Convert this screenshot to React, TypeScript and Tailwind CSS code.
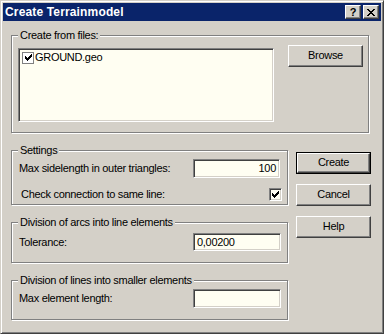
const font = "font-['Liberation_Sans',Arial,sans-serif]";
const raised =
  "border border-t-white border-l-white border-b-[#404040] border-r-[#404040] shadow-[inset_-1px_-1px_0_#808080]";
const sunken =
  "border border-t-[#808080] border-l-[#808080] border-b-white border-r-white shadow-[inset_1px_1px_0_#404040,inset_-1px_-1px_0_#d4d0c8]";
const etched = "relative border border-[#808080] shadow-[inset_1px_1px_0_#fff,1px_1px_0_#fff]";

function Check() {
  return (
    <svg width="7" height="7" viewBox="0 0 7 7" shapeRendering="crispEdges">
      <path
        fill="#000"
        d="M0 2h1v3H0z M1 3h1v3H1z M2 4h1v3H2z M3 3h1v3H3z M4 2h1v3H4z M5 1h1v3H5z M6 0h1v3H6z"
      />
    </svg>
  );
}

function CheckBox() {
  return (
    <div className={`${sunken} flex h-[13px] w-[13px] items-center justify-center bg-[#fffef2]`}>
      <Check />
    </div>
  );
}

function Group({
  title,
  className,
  children,
}: {
  title: string;
  className: string;
  children: React.ReactNode;
}) {
  return (
    <div className={`${etched} ${className}`}>
      <span className="absolute left-[6px] top-[-7px] bg-[#d4d0c8] px-[2px] leading-[13px]">
        {title}
      </span>
      {children}
    </div>
  );
}

function Button({ label, isDefault }: { label: string; isDefault?: boolean }) {
  if (isDefault) {
    return (
      <div className="h-[22px] w-[75px] border border-black">
        <div className={`${raised} flex h-full w-full items-center justify-center pb-px`}>{label}</div>
      </div>
    );
  }
  return (
    <div className={`${raised} flex h-[22px] w-[75px] items-center justify-center pb-px`}>{label}</div>
  );
}

function Field({ value, right, h }: { value: string; right?: boolean; h: string }) {
  return (
    <div
      className={`${sunken} ${h} flex items-center bg-[#fffef2] px-[3px] ${
        right ? "justify-end" : "justify-start"
      }`}
    >
      {value}
    </div>
  );
}

export default function App() {
  return (
    <div
      className={`${font} h-[334px] w-[384px] overflow-hidden border border-t-[#d4d0c8] border-l-[#d4d0c8] border-b-[#404040] border-r-[#404040] bg-[#d4d0c8] p-[2px] text-[11px] leading-[13px] tracking-[-0.3px] text-black shadow-[inset_1px_1px_0_#fff,inset_-1px_-1px_0_#808080]`}
    >
      {/* title bar */}
      <div className="flex h-[18px] items-center justify-between bg-[#0a246a] pl-[2px] pr-[2px]">
        <span className="text-[12px] font-bold tracking-[0.15px] text-white">Create Terrainmodel</span>
        <div className="flex gap-[2px]">
          <div className={`${raised} flex h-[14px] w-[16px] items-center justify-center bg-[#d4d0c8] text-[11px] font-bold leading-none`}>
            ?
          </div>
          <div className={`${raised} flex h-[14px] w-[16px] items-center justify-center bg-[#d4d0c8]`}>
            <svg width="8" height="7" viewBox="0 0 8 7" shapeRendering="crispEdges">
              <path
                fill="#000"
                d="M0 0h2v1H0z M6 0h2v1H6z M1 1h2v1H1z M5 1h2v1H5z M2 2h4v1H2z M3 3h2v1H3z M2 4h4v1H2z M1 5h2v1H1z M5 5h2v1H5z M0 6h2v1H0z M6 6h2v1H6z"
              />
            </svg>
          </div>
        </div>
      </div>

      <div className="pl-[8px]">
        <Group title="Create from files:" className="mt-[14px] h-[98px] w-[358px]">
          <div className="flex items-start pl-[6px] pt-[9px]">
            <div className={`${sunken} mt-[3px] h-[74px] w-[256px] bg-[#fffef2] pl-[3px] pt-[2px]`}>
              <div className="flex items-center gap-[1px]">
                <div className="flex h-[12px] w-[12px] items-center justify-center border border-[#808080] bg-white">
                  <Check />
                </div>
                <span>GROUND.geo</span>
              </div>
            </div>
            <div className="ml-[14px]">
              <Button label="Browse" />
            </div>
          </div>
        </Group>

        <div className="mt-[17px] flex items-start">
          <div className="flex w-[277px] flex-col gap-[17px]">
            <Group title="Settings" className="h-[55px]">
              <div className="flex flex-col gap-[10px] pl-[7px] pt-[8px]">
                <div className="flex items-center justify-between pr-[7px]">
                  <span>Max sidelength in outer triangles:</span>
                  <div className="w-[87px]">
                    <Field value="100" right h="h-[19px]" />
                  </div>
                </div>
                <div className="flex items-center justify-between pl-[2px] pr-[5px]">
                  <span>Check connection to same line:</span>
                  <CheckBox />
                </div>
              </div>
            </Group>

            <Group title="Division of arcs into line elements" className="h-[41px]">
              <div className="flex items-center justify-between pl-[7px] pr-[6px] pt-[10px]">
                <span>Tolerance:</span>
                <div className="w-[88px]">
                  <Field value="0,00200" h="h-[18px]" />
                </div>
              </div>
            </Group>

            <Group title="Division of lines into smaller elements" className="h-[40px]">
              <div className="flex items-center justify-between pl-[7px] pr-[6px] pt-[8px]">
                <span>Max element length:</span>
                <div className="w-[88px]">
                  <Field value="" h="h-[19px]" />
                </div>
              </div>
            </Group>
          </div>

          <div className="ml-[8px] flex flex-col gap-[10px] pt-[2px]">
            <Button label="Create" isDefault />
            <Button label="Cancel" />
            <Button label="Help" />
          </div>
        </div>
      </div>
    </div>
  );
}
